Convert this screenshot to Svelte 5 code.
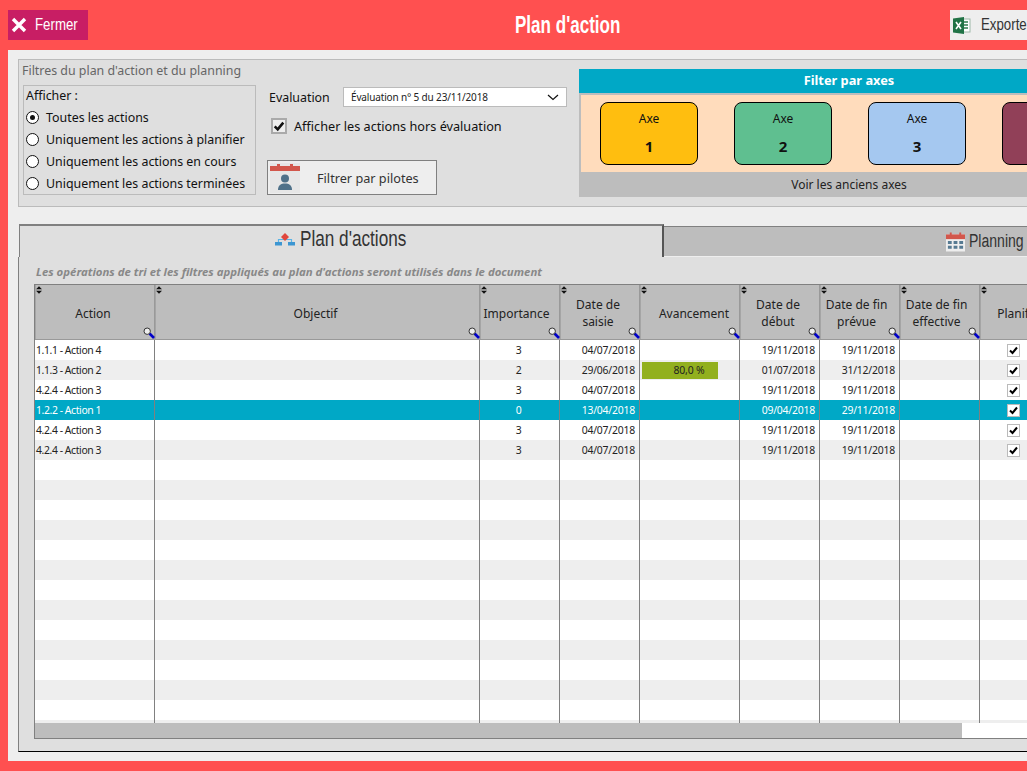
<script>
  const radios = [
    { label: 'Toutes les actions', checked: true },
    { label: 'Uniquement les actions à planifier', checked: false },
    { label: 'Uniquement les actions en cours', checked: false },
    { label: 'Uniquement les actions terminées', checked: false }
  ];

  const axes = [
    { num: 1, color: '#ffbe0f' },
    { num: 2, color: '#5fbf90' },
    { num: 3, color: '#a5c8f0' },
    { num: 4, color: '#914058' }
  ];

  const columns = [
    ['Action'],
    ['Objectif'],
    ['Importance'],
    ['Date de', 'saisie'],
    ['Avancement'],
    ['Date de', 'début'],
    ['Date de fin', 'prévue'],
    ['Date de fin', 'effective'],
    ['Planifié']
  ];

  const rows = [
    { action: '1.1.1 - Action 4', imp: 3, saisie: '04/07/2018', debut: '19/11/2018', fin: '19/11/2018' },
    { action: '1.1.3 - Action 2', imp: 2, saisie: '29/06/2018', avancement: '80,0 %', debut: '01/07/2018', fin: '31/12/2018' },
    { action: '4.2.4 - Action 3', imp: 3, saisie: '04/07/2018', debut: '19/11/2018', fin: '19/11/2018' },
    { action: '1.2.2 - Action 1', imp: 0, saisie: '13/04/2018', debut: '09/04/2018', fin: '29/11/2018', selected: true },
    { action: '4.2.4 - Action 3', imp: 3, saisie: '04/07/2018', debut: '19/11/2018', fin: '19/11/2018' },
    { action: '4.2.4 - Action 3', imp: 3, saisie: '04/07/2018', debut: '19/11/2018', fin: '19/11/2018' }
  ];

  // lignes vides pour remplir la grille
  const emptyRows = Array.from({ length: 14 });
</script>

<div class="page">
  <header class="topbar">
    <button class="close">
      <svg width="16" height="16" viewBox="0 0 16 16"><path d="M2 2 L14 14 M14 2 L2 14" stroke="#fff" stroke-width="3.4" /></svg>
      <span class="narrow close-label">Fermer</span>
    </button>
    <h1 class="narrow title">Plan d'action</h1>
    <button class="export">
      <svg width="18" height="17" viewBox="0 0 18 17">
        <rect x="8" y="2" width="9" height="13" fill="#fff" stroke="#9db8a8" />
        <path d="M10 5h5M10 8h5M10 11h5" stroke="#2f7d4f" stroke-width="1.4" />
        <path d="M0 1.5 L11 0 V17 L0 15.5 Z" fill="#217346" />
        <path d="M3 5 L8 12 M8 5 L3 12" stroke="#fff" stroke-width="1.6" />
      </svg>
      <span class="narrow export-label">Exporter</span>
    </button>
  </header>

  <main class="content">
    <section class="filters">
      <div class="filters-left">
        <div class="filters-title">Filtres du plan d'action et du planning</div>
        <div class="filters-body">
          <div class="show-box">
            <div class="show-title">Afficher :</div>
            {#each radios as radio}
              <div class="radio-row">
                <span class="radio">{#if radio.checked}<span class="radio-dot"></span>{/if}</span>
                <span>{radio.label}</span>
              </div>
            {/each}
          </div>
          <div class="eval">
            <div class="eval-row">
              <span>Evaluation</span>
              <div class="select">
                <span>Évaluation n° 5 du 23/11/2018</span>
                <svg width="12" height="7" viewBox="0 0 12 7"><path d="M1 1 L6 5.5 L11 1" fill="none" stroke="#111" stroke-width="1.2" /></svg>
              </div>
            </div>
            <div class="eval-check">
              <span class="big-check">
                <svg width="14" height="14" viewBox="0 0 14 14"><path d="M2 7.5 L5.5 11 L12 3" fill="none" stroke="#111" stroke-width="3" /></svg>
              </span>
              <span>Afficher les actions hors évaluation</span>
            </div>
            <button class="pilots">
              <svg class="pilots-icon" width="30" height="30" viewBox="0 0 30 30">
                <rect x="0" y="0" width="30" height="30" fill="#e6e6e6" />
                <rect x="0" y="3" width="30" height="5" fill="#d2574c" />
                <rect x="7" y="1" width="3" height="3" fill="#d2574c" />
                <rect x="20" y="1" width="3" height="3" fill="#d2574c" />
                <circle cx="15" cy="15.5" r="4" fill="#4f7189" />
                <path d="M8 27 C8 22 11 20.5 15 20.5 C19 20.5 22 22 22 27 Z" fill="#4f7189" />
              </svg>
              <span class="pilots-label">Filtrer par pilotes</span>
            </button>
          </div>
        </div>
      </div>

      <div class="axes">
        <div class="axes-head">Filter par axes</div>
        <div class="axes-list">
          {#each axes as axe}
            <div class="axe" style="background: {axe.color}">
              <span>Axe</span>
              <strong>{axe.num}</strong>
            </div>
          {/each}
        </div>
        <div class="axes-foot">Voir les anciens axes</div>
      </div>
    </section>

    <div class="tabs">
      <div class="tab tab-active">
        <svg width="20" height="15" viewBox="0 0 20 15">
          <path d="M3.5 11 V7.5 H16.5 V11" fill="none" stroke="#5ab4e6" stroke-width="1.2" />
          <rect x="0" y="10" width="7" height="3.5" fill="#3c96d2" />
          <rect x="13" y="10" width="7" height="3.5" fill="#3c96d2" />
          <path d="M10 1 L14 5 L10 9 L6 5 Z" fill="#e0463c" />
        </svg>
        <span class="narrow tab-label">Plan d'actions</span>
      </div>
      <div class="tab tab-other">
        <svg width="19" height="20" viewBox="0 0 20 20">
          <rect x="0" y="2" width="20" height="18" fill="#eee" />
          <rect x="0" y="2" width="20" height="5" fill="#d2574c" />
          <rect x="4" y="0" width="2" height="3" fill="#d2574c" />
          <rect x="14" y="0" width="2" height="3" fill="#d2574c" />
          <path d="M2 9h4v3H2zM8 9h4v3H8zM14 9h4v3h-4zM2 14h4v3H2zM8 14h4v3H8zM14 14h4v3h-4z" fill="#567a92" />
        </svg>
        <span class="narrow tab-label">Planning</span>
      </div>
    </div>

    <section class="panel">
      <div class="notice">Les opérations de tri et les filtres appliqués au plan d'actions seront utilisés dans le document</div>
      <div class="table">
        <div class="grid thead">
          {#each columns as col, i}
            <div class="th" class:shifted={i === 4} class:wide={i === 2 || i === 6 || i === 7}>
              <svg class="sort" width="6" height="8" viewBox="0 0 7 9"><path d="M3.5 0 L7 3.5 H0 Z M3.5 9 L0 5.5 H7 Z" fill="#111" /></svg>
              <span>{col[0]}</span>
              {#if col[1]}<span>{col[1]}</span>{/if}
              <svg class="lens" width="12" height="12" viewBox="0 0 12 12">
                <path d="M6.5 6.5 L11 11" stroke="#0000c8" stroke-width="2.6" />
                <circle cx="4.2" cy="4.2" r="3.2" fill="#eee" stroke="#333" stroke-width="1" />
              </svg>
            </div>
          {/each}
        </div>
        <div class="tbody">
          {#each rows as row}
            <div class="grid row" class:selected={row.selected}>
              <div class="td action">{row.action}</div>
              <div class="td"></div>
              <div class="td center">{row.imp}</div>
              <div class="td right">{row.saisie}</div>
              <div class="td progress-cell">
                {#if row.avancement}<div class="progress">{row.avancement}</div>{/if}
              </div>
              <div class="td right">{row.debut}</div>
              <div class="td right">{row.fin}</div>
              <div class="td"></div>
              <div class="td">
                <span class="cell-check">
                  <svg width="9" height="9" viewBox="0 0 9 9"><path d="M1 4.5 L3.5 7 L8 1.5" fill="none" stroke="#000" stroke-width="2" /></svg>
                </span>
              </div>
            </div>
          {/each}
          {#each emptyRows as _}
            <div class="grid row">
              {#each columns as col}<div class="td"></div>{/each}
            </div>
          {/each}
        </div>
        <div class="scrollbar"><div class="thumb"></div></div>
      </div>
    </section>
  </main>
</div>

<style>
  :global(body) {
    margin: 0;
    background: #ff5050;
  }

  .page {
    width: 1027px;
    height: 771px;
    overflow: hidden;
    background: #ff5050;
    font-family: "Noto Sans", "DejaVu Sans", sans-serif;
    font-size: 12.4px;
    color: #111;
  }

  button {
    font: inherit;
    border: none;
    padding: 0;
    cursor: pointer;
  }

  svg {
    flex: none;
  }

  .narrow {
    font-family: "Liberation Sans", Arial, sans-serif;
    display: inline-block;
    transform-origin: left center;
    transform: scaleX(0.78);
  }

  .topbar {
    position: relative;
    height: 50px;
    display: flex;
    align-items: center;
    justify-content: space-between;
    padding-left: 8px;
    box-sizing: border-box;
  }

  .close {
    width: 80px;
    height: 30px;
    background: #c81e64;
    color: #fff;
    display: flex;
    align-items: center;
    padding-left: 3px;
    gap: 8px;
    box-sizing: border-box;
    flex: none;
  }

  .close-label {
    font-size: 17px;
  }

  .title {
    position: absolute;
    left: 515px;
    top: 11px;
    margin: 0;
    font-size: 24px;
    line-height: 28px;
    color: #fff;
    font-weight: bold;
    white-space: nowrap;
    transform: scaleX(0.71);
  }

  .export {
    width: 77px;
    height: 30px;
    background: #eee;
    color: #333;
    display: flex;
    align-items: center;
    padding-left: 3px;
    gap: 10px;
    box-sizing: border-box;
    overflow: hidden;
    flex: none;
  }

  .export-label {
    font-size: 17px;
    flex: none;
  }

  .content {
    margin-left: 8px;
    width: 1100px;
    height: 711px;
    background: #eee;
    padding: 9px 0 0 10px;
    box-sizing: border-box;
  }

  .filters {
    display: flex;
    width: 1080px;
    height: 148px;
    box-sizing: border-box;
    background: #dfdfdf;
    border: 1px solid #bbb;
  }

  .filters-left {
    width: 560px;
    flex: none;
  }

  .filters-title {
    color: #666;
    padding-left: 3px;
    height: 25px;
    line-height: 21px;
  }

  .filters-body {
    display: flex;
  }

  .show-box {
    width: 233px;
    height: 110px;
    margin-left: 4px;
    box-sizing: border-box;
    border: 1px solid #bbb;
    padding: 0 2px;
    flex: none;
  }

  .show-title {
    height: 21px;
    line-height: 20px;
  }

  .radio-row {
    height: 21.8px;
    display: flex;
    align-items: center;
    gap: 7px;
    white-space: nowrap;
  }

  .radio {
    width: 11px;
    height: 11px;
    border: 1px solid #111;
    border-radius: 50%;
    background: #fff;
    display: flex;
    align-items: center;
    justify-content: center;
    flex: none;
  }

  .radio-dot {
    width: 5px;
    height: 5px;
    border-radius: 50%;
    background: #111;
  }

  .eval {
    margin-left: 13px;
    flex: 1;
  }

  .eval-row {
    display: flex;
    align-items: center;
    height: 22px;
    margin-top: 1px;
  }

  .eval-row > span {
    width: 74px;
    flex: none;
  }

  .select {
    width: 224px;
    height: 20px;
    box-sizing: border-box;
    background: #fff;
    border: 1px solid #bbb;
    display: flex;
    align-items: center;
    justify-content: space-between;
    padding: 0 7px;
    font-size: 10px;
    letter-spacing: -0.15px;
    color: #222;
    flex: none;
  }

  .eval-check {
    display: flex;
    align-items: center;
    gap: 7px;
    margin: 10px 0 0 2px;
    height: 16px;
    font-size: 12.7px;
  }

  .big-check {
    width: 16px;
    height: 16px;
    box-sizing: border-box;
    background: #eee;
    border: 2px solid #aaa;
    display: flex;
    align-items: center;
    justify-content: center;
  }

  .big-check svg {
    width: 12px;
    height: 12px;
  }

  .pilots {
    width: 170px;
    height: 35px;
    margin: 26px 0 0 -2px;
    box-sizing: border-box;
    background: #eee;
    border: 1px solid #808080;
    display: flex;
    align-items: center;
    padding-left: 2px;
    color: #333;
    font-size: 12.7px;
  }

  .pilots-label {
    margin-left: 17px;
  }

  .axes {
    margin-top: 9px;
    width: 500px;
    height: 128px;
    background: #bdbdbd;
    flex: none;
  }

  .axes-head {
    height: 24px;
    line-height: 23px;
    background: #00a8c6;
    color: #fff;
    font-weight: bold;
    font-size: 12.8px;
    text-align: center;
    width: 540px;
  }

  .axes-list {
    margin: 2px 0 0 2px;
    height: 77px;
    background: #ffdcbc;
    display: flex;
    gap: 36px;
    padding: 7px 0 0 19px;
    box-sizing: border-box;
  }

  .axe {
    width: 98px;
    height: 63px;
    box-sizing: border-box;
    border: 1px solid #000;
    border-radius: 8px;
    display: flex;
    flex-direction: column;
    align-items: center;
    padding-top: 7px;
    gap: 9px;
    flex: none;
    font-size: 12px;
  }

  .axe strong {
    font-size: 15px;
  }

  .axes-foot {
    height: 25px;
    line-height: 26px;
    font-size: 12px;
    text-align: center;
    width: 540px;
    color: #222;
  }

  .tabs {
    display: flex;
    align-items: flex-end;
    height: 33px;
    margin-top: 17px;
    padding-left: 1px;
  }

  .tab {
    display: flex;
    align-items: center;
    box-sizing: border-box;
    color: #333;
    flex: none;
  }

  .tab-active {
    width: 645px;
    height: 33px;
    background: #dfdfdf;
    border-top: 2px solid #808080;
    border-left: 1px solid #808080;
    border-right: 2px solid #555;
    padding: 0 0 5px 255px;
    gap: 5px;
  }

  .tab-other {
    width: 500px;
    height: 30px;
    margin-bottom: 1px;
    background: #bdbdbd;
    border-top: 1px solid #808080;
    padding-left: 282px;
    gap: 4px;
  }

  .tab-label {
    font-size: 22px;
  }

  .tab-other .tab-label {
    font-size: 18px;
  }

  .panel {
    width: 1080px;
    height: 495px;
    box-sizing: border-box;
    background: #dfdfdf;
    border-left: 1px solid #808080;
    border-bottom: 1px solid #000;
    padding-left: 15px;
  }

  .notice {
    height: 27px;
    line-height: 30px;
    padding-left: 2px;
    font-size: 11.4px;
    font-style: italic;
    font-weight: bold;
    color: #888;
  }

  .table {
    width: 1060px;
    border: 1px solid #808080;
    background: #fff;
  }

  .grid {
    display: grid;
    grid-template-columns: 120px 325px 80px 80px 100px 80px 80px 80px 80px;
  }

  .thead {
    height: 55px;
    border-bottom: 1px solid #999;
    box-sizing: border-box;
    background: #bdbdbd;
  }

  .th {
    position: relative;
    display: flex;
    flex-direction: column;
    align-items: center;
    justify-content: center;
    font-size: 12px;
    line-height: 17px;
    color: #222;
    box-sizing: border-box;
    border-right: 1px solid #999;
    border-left: 1px solid #a5a5a5;
    padding: 2px 4px 0 0;
  }

  .th.shifted {
    padding: 2px 0 0 8px;
  }

  .th.wide {
    padding-right: 7px;
  }

  .sort {
    position: absolute;
    left: 0;
    top: 1px;
  }

  .lens {
    position: absolute;
    right: -1px;
    bottom: 0;
  }

  .tbody {
    height: 383px;
    overflow: hidden;
  }

  .row {
    height: 20px;
    background: #fff;
    font-size: 10.4px;
    letter-spacing: -0.2px;
    color: #222;
  }

  .row:nth-child(even) {
    background: #eee;
  }

  .row.selected {
    background: #00a8c6;
    color: #fff;
  }

  .td {
    box-sizing: border-box;
    border-right: 1px solid #808080;
    line-height: 20px;
    padding: 0 1px;
    white-space: pre;
    display: flex;
    align-items: center;
    justify-content: flex-start;
  }

  .action {
    letter-spacing: -0.35px;
    word-spacing: -0.3px;
  }

  .center {
    justify-content: center;
    padding-right: 3px;
  }

  .right {
    justify-content: flex-end;
    padding-right: 4px;
  }

  .progress-cell {
    padding: 0 2px;
  }

  .progress {
    width: 76px;
    height: 17px;
    line-height: 17px;
    text-align: center;
    background: #92b01e;
    color: #222;
    padding-left: 18px;
    box-sizing: border-box;
  }

  .cell-check {
    width: 11px;
    height: 11px;
    margin-left: 26px;
    background: #fff;
    border: 1px solid #bbb;
    display: flex;
    align-items: center;
    justify-content: center;
  }

  .scrollbar {
    height: 15px;
    background: #fff;
  }

  .thumb {
    width: 927px;
    height: 15px;
    background: #bdbdbd;
  }
</style>
